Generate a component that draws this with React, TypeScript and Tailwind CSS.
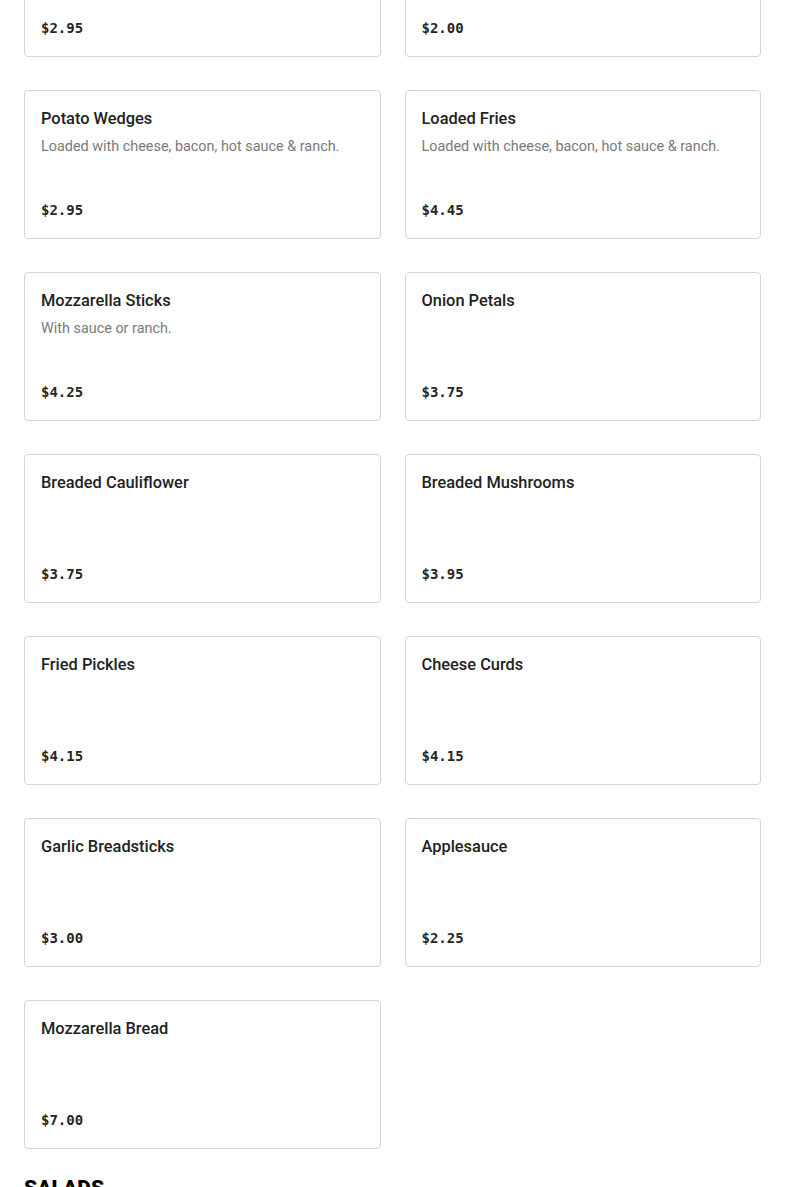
import React from "react";

const items = [
  { name: "Chili Cheese Fries", description: "", price: "$2.95" },
  { name: "Side Salad", description: "", price: "$2.00" },
  {
    name: "Potato Wedges",
    description: "Loaded with cheese, bacon, hot sauce & ranch.",
    price: "$2.95",
  },
  {
    name: "Loaded Fries",
    description: "Loaded with cheese, bacon, hot sauce & ranch.",
    price: "$4.45",
  },
  { name: "Mozzarella Sticks", description: "With sauce or ranch.", price: "$4.25" },
  { name: "Onion Petals", description: "", price: "$3.75" },
  { name: "Breaded Cauliflower", description: "", price: "$3.75" },
  { name: "Breaded Mushrooms", description: "", price: "$3.95" },
  { name: "Fried Pickles", description: "", price: "$4.15" },
  { name: "Cheese Curds", description: "", price: "$4.15" },
  { name: "Garlic Breadsticks", description: "", price: "$3.00" },
  { name: "Applesauce", description: "", price: "$2.25" },
  { name: "Mozzarella Bread", description: "", price: "$7.00" },
];

function MenuCard({ item }: { item: (typeof items)[0] }) {
  return (
    <div className="flex h-[149px] flex-col rounded-[4px] border border-[#d4d4d4] bg-white px-4 pt-4 pb-4">
      <h3 className="text-[16.4px] leading-6 font-medium text-[#222222]">{item.name}</h3>
      {item.description && (
        <p className="mt-1 text-[14.4px] leading-6 text-[#7a7a7a]">{item.description}</p>
      )}
      <div className="mt-auto font-['DejaVu_Sans_Mono',monospace] text-[14px] leading-6 font-bold text-[#262626]">
        {item.price}
      </div>
    </div>
  );
}

export default function App() {
  return (
    <div className="min-h-[1187px] overflow-hidden bg-white font-['Roboto',sans-serif]">
      <div className="-mt-[92px] px-6">
        <div className="grid grid-cols-2 gap-x-6 gap-y-[33px]">
          {items.map((item) => (
            <MenuCard key={item.name} item={item} />
          ))}
        </div>

        {/* Next section */}
        <h2 className="mt-[23px] text-[21px] leading-8 font-black text-black">SALADS</h2>
      </div>
    </div>
  );
}
